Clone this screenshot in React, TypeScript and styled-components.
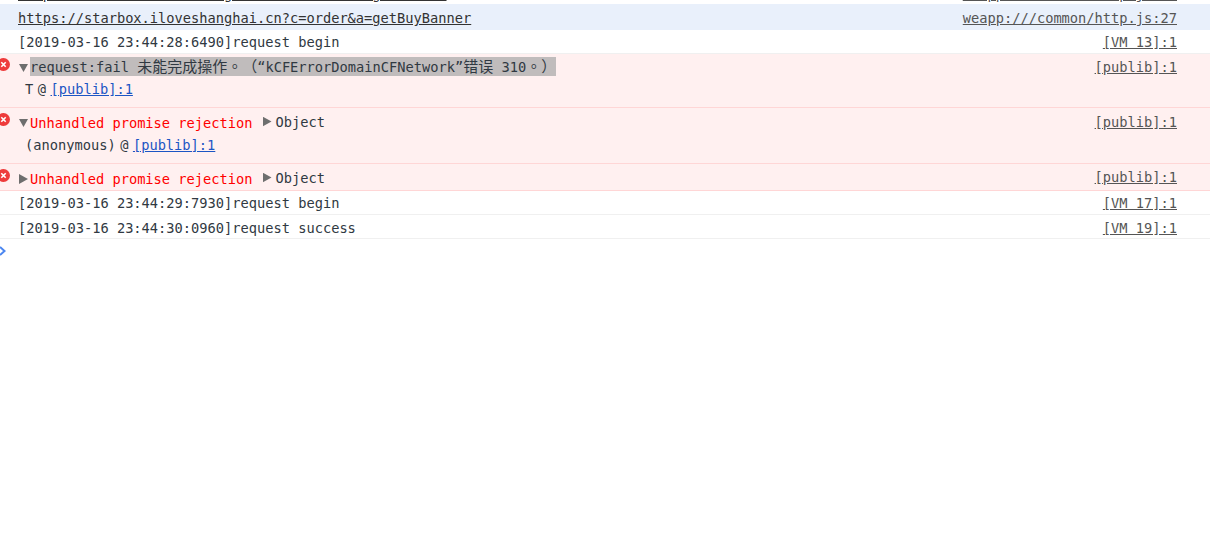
import styled, { createGlobalStyle } from 'styled-components'

const GlobalStyle = createGlobalStyle`
  html, body {
    margin: 0;
    padding: 0;
    background: #fff;
  }
`

const Console = styled.div`
  width: 1210px;
  height: 551px;
  overflow: hidden;
  font-family: 'DejaVu Sans Mono', 'Noto Sans CJK TC', monospace;
  font-size: 13.7px;
  color: #303942;
`

const ClippedRow = styled.div`
  height: 2px;
  margin-bottom: 2px;
  padding: 0 33px 0 18px;
  display: flex;
  justify-content: space-between;
  align-items: flex-end;
  overflow: hidden;
  color: #444;
`

const LogRow = styled.div<{ $height: number; $tone?: 'info' | 'error' | 'plain' }>`
  box-sizing: border-box;
  height: ${p => p.$height}px;
  position: relative;
  padding: 0 33px 0 18px;
  background: ${p => (p.$tone === 'info' ? '#e9f0fb' : p.$tone === 'error' ? '#fff0f0' : '#fff')};
  border-bottom: 1px solid ${p => (p.$tone === 'error' ? '#ffd6d6' : p.$tone === 'info' ? '#e9f0fb' : '#f0f0f0')};
`

const Line = styled.div<{ $height: number; $drop?: number }>`
  box-sizing: border-box;
  height: ${p => p.$height}px;
  padding-top: ${p => p.$drop ?? 0}px;
  display: flex;
  align-items: center;
  justify-content: space-between;
  white-space: pre;
`

const Message = styled.span`
  display: flex;
  align-items: center;
`

const Stack = styled.div`
  margin-top: 2px;
  padding-left: 7px;
  display: flex;
  align-items: center;
  gap: 4.5px;
`

const Source = styled.span<{ $lift?: number }>`
  color: #555;
  text-decoration: underline;
  margin-bottom: ${p => p.$lift ?? 0}px;
`

const Url = styled.span`
  color: #333;
  text-decoration: underline;
`

const StackLink = styled.span`
  color: #1c55c4;
  text-decoration: underline;
`

const ErrorText = styled.span`
  color: #f00;
  padding-top: 2px;
`

const Selected = styled.span`
  background: #c0bcbc;
  color: #303942;
  line-height: 18px;
`

const Cjk = styled.span`
  font-size: 15px;
  font-family: 'Noto Sans CJK TC', sans-serif;
  text-spacing-trim: space-all;
`

const Arrow = styled.span<{ $open?: boolean }>`
  display: inline-block;
  flex: none;
  margin: 3px 2px 0 1px;
  background: #6e6e6e;
  width: 9px;
  height: ${p => (p.$open ? 8 : 10)}px;
  clip-path: ${p => (p.$open ? 'polygon(0 0, 100% 0, 50% 100%)' : 'polygon(0 0, 100% 50%, 0 100%)')};
`

const ObjectArrow = styled(Arrow)`
  margin: 0 4px 0 10px;
`

const ErrorBadge = styled.svg<{ $top: number }>`
  position: absolute;
  left: -3px;
  top: ${p => p.$top}px;
  width: 13px;
  height: 13px;
`

const Prompt = styled.svg`
  display: block;
  margin: 7px 0 0 0;
  width: 7px;
  height: 10px;
`

const ErrorIcon = ({ top }: { top: number }) => (
  <ErrorBadge $top={top} viewBox="0 0 13 13">
    <circle cx="6.5" cy="6.5" r="6.5" fill="#ee3b3b" />
    <path d="M4.3 4.3l4.4 4.4M8.7 4.3l-4.4 4.4" stroke="#fff" strokeWidth="1.6" />
  </ErrorBadge>
)

const url = 'https://starbox.iloveshanghai.cn?c=order&a=getBuyBanner'

const App = () => (
  <Console>
    <GlobalStyle />
    <ClippedRow>
      <Url>https://starbox.iloveshanghai.cn?c=order&a=getBanner</Url>
      <Source>weapp:///common/http.js:27</Source>
    </ClippedRow>
    <LogRow $height={26} $tone="info">
      <Line $height={26} $drop={2}>
        <Url>{url}</Url>
        <Source>weapp:///common/http.js:27</Source>
      </Line>
    </LogRow>
    <LogRow $height={24}>
      <Line $height={24}>
        <span>[2019-03-16 23:44:28:6490]request begin</span>
        <Source>[VM 13]:1</Source>
      </Line>
    </LogRow>
    <LogRow $height={54} $tone="error">
      <ErrorIcon top={4} />
      <Line $height={25}>
        <Message>
          <Arrow $open />
          <Selected>
            request:fail <Cjk>未能完成操作。（</Cjk>“kCFErrorDomainCFNetwork”<Cjk>错误</Cjk> 310<Cjk>。）</Cjk>
          </Selected>
        </Message>
        <Source>[publib]:1</Source>
      </Line>
      <Stack>
        <span>T</span>
        <span>@</span>
        <StackLink>[publib]:1</StackLink>
      </Stack>
    </LogRow>
    <LogRow $height={56} $tone="error">
      <ErrorIcon top={5} />
      <Line $height={27}>
        <Message>
          <Arrow $open />
          <ErrorText>Unhandled promise rejection</ErrorText>
          <ObjectArrow />
          Object
        </Message>
        <Source>[publib]:1</Source>
      </Line>
      <Stack>
        <span>(anonymous)</span>
        <span>@</span>
        <StackLink>[publib]:1</StackLink>
      </Stack>
    </LogRow>
    <LogRow $height={27} $tone="error">
      <ErrorIcon top={5} />
      <Line $height={27}>
        <Message>
          <Arrow />
          <ErrorText>Unhandled promise rejection</ErrorText>
          <ObjectArrow />
          Object
        </Message>
        <Source $lift={2}>[publib]:1</Source>
      </Line>
    </LogRow>
    <LogRow $height={24}>
      <Line $height={24}>
        <span>[2019-03-16 23:44:29:7930]request begin</span>
        <Source>[VM 17]:1</Source>
      </Line>
    </LogRow>
    <LogRow $height={24}>
      <Line $height={24} $drop={2}>
        <span>[2019-03-16 23:44:30:0960]request success</span>
        <Source>[VM 19]:1</Source>
      </Line>
    </LogRow>
    <Prompt viewBox="0 0 7 10">
      <path d="M0 1l4.5 4L0 9" fill="none" stroke="#4b86f0" strokeWidth="2" />
    </Prompt>
  </Console>
)

export default App
